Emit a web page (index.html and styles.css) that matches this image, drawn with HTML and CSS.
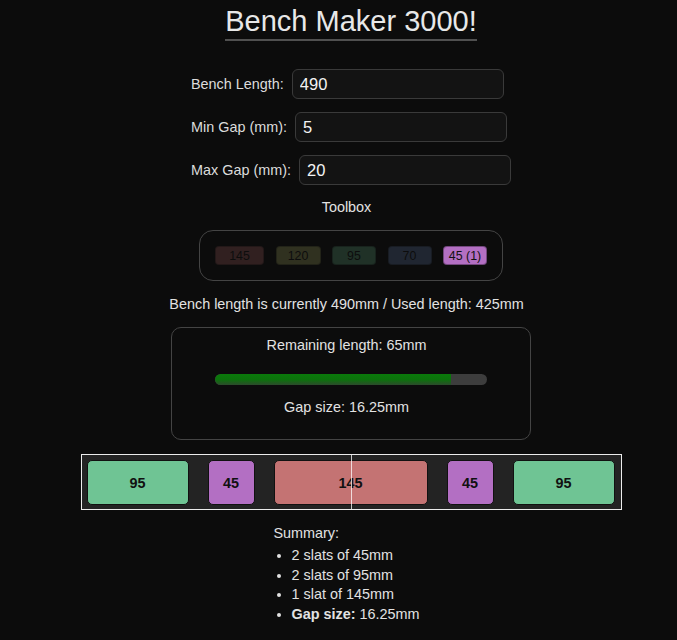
FILE: index.html
```html
<!DOCTYPE html>
<html lang="en">
<head>
<meta charset="utf-8">
<title>Bench Maker 3000!</title>
<link rel="stylesheet" href="styles.css">
</head>
<body>
<div class="app">
  <h1 class="title">Bench Maker 3000!</h1>

  <form class="form">
    <div class="row">
      <label class="label" for="len">Bench Length:</label>
      <input class="input" id="len" type="text" value="490">
    </div>
    <div class="row">
      <label class="label" for="min">Min Gap (mm):</label>
      <input class="input" id="min" type="text" value="5">
    </div>
    <div class="row">
      <label class="label" for="max">Max Gap (mm):</label>
      <input class="input" id="max" type="text" value="20">
    </div>
  </form>

  <div class="txt toolbox-label">Toolbox</div>
  <div class="toolbox">
    <button class="tool c145 dim w49">145</button>
    <button class="tool c120 dim w45">120</button>
    <button class="tool c95 dim w44">95</button>
    <button class="tool c70 dim w44">70</button>
    <button class="tool c45 w44">45 (1)</button>
  </div>

  <p class="txt status-line">Bench length is currently 490mm / Used length: 425mm</p>

  <div class="status">
    <p class="txt remaining">Remaining length: 65mm</p>
    <div class="progress"><div class="fill" style="width: 86.7%"></div></div>
    <p class="txt gap">Gap size: 16.25mm</p>
  </div>

  <div class="bench">
    <div class="slat c95 w102">95</div>
    <div class="slat c45 w47">45</div>
    <div class="slat c145 w154">145</div>
    <div class="slat c45 w47">45</div>
    <div class="slat c95 w102">95</div>
    <div class="center-line"></div>
  </div>

  <div class="txt summary">
    <div class="summary-title">Summary:</div>
    <ul class="summary-list">
      <li>2 slats of 45mm</li>
      <li>2 slats of 95mm</li>
      <li>1 slat of 145mm</li>
      <li><b>Gap size:</b> 16.25mm</li>
    </ul>
  </div>
</div>
</body>
</html>
```
FILE: styles.css
```css
html, body {
  background: #0c0c0c;
}
body {
  margin: 0;
  padding: 0 0 0 25px;
  color: #e2e2e2;
  font-family: "Liberation Sans", Arial, sans-serif;
  font-size: 14.4px;
}
.app {
  display: flex;
  flex-direction: column;
  align-items: center;
}
.txt {
  padding-right: 9px;
}
.title {
  margin: 5px 0 0 0;
  font-size: 29px;
  line-height: 33px;
  font-weight: normal;
  color: #e8e8e8;
  padding-bottom: 1px;
  border-bottom: 2px solid #505050;
}
.form {
  width: 320px;
  margin-top: 28px;
  display: flex;
  flex-direction: column;
  gap: 13px;
}
.row {
  display: flex;
  align-items: center;
  gap: 8px;
}
.label {
  color: #dcdcdc;
  font-size: 14.4px;
}
.input {
  box-sizing: border-box;
  width: 212px;
  height: 30px;
  background: #131313;
  border: 1px solid #3a3a3a;
  border-radius: 6px;
  color: #f4f4f4;
  font-family: "Liberation Sans", Arial, sans-serif;
  font-size: 16.5px;
  padding: 0 7px;
  outline: none;
}
.toolbox-label {
  margin-top: 14px;
  line-height: 16px;
}
.toolbox {
  box-sizing: border-box;
  width: 304px;
  margin-top: 15px;
  border: 1px solid #444;
  border-radius: 14px;
  padding: 15px 12px 15px 15px;
  display: flex;
  gap: 11.5px;
}
.tool {
  height: 19px;
  padding: 0;
  font-family: "Liberation Sans", Arial, sans-serif;
  font-size: 12.4px;
  color: #111;
  border: 1px solid rgba(0, 0, 0, 0.35);
  border-radius: 4px;
  text-align: center;
}
.dim {
  opacity: 0.2;
}
.w49 { width: 49px; }
.w45 { width: 45px; }
.w44 { width: 44px; }
.c145 { background: #c47373; }
.c120 { background: #c0c470; }
.c95 { background: #6fc494; }
.c70 { background: #7390c4; }
.c45 { background: #b36fc3; }

.status-line {
  margin: 15px 0 0;
  line-height: 16px;
}
.status {
  box-sizing: border-box;
  width: 360px;
  margin-top: 15px;
  border: 1px solid #444;
  border-radius: 10px;
  padding: 9px 0 24px;
  display: flex;
  flex-direction: column;
  align-items: center;
}
.status p {
  margin: 0;
  line-height: 16px;
}
.progress {
  width: 272px;
  height: 11px;
  margin-top: 21px;
  background: #3d3d3d;
  border-radius: 6px;
  overflow: hidden;
}
.fill {
  height: 100%;
  background: linear-gradient(to bottom, #0a7a0a 0%, #0c720c 50%, #2c4b2c 100%);
  border-radius: 6px 0 0 6px;
}
.status .gap {
  margin-top: 14px;
}
.bench {
  position: relative;
  box-sizing: border-box;
  width: 541px;
  margin-top: 14px;
  border: 1px solid #ececec;
  background: #232323;
  padding: 5px 6px 4px 5px;
  display: flex;
  justify-content: space-between;
}
.slat {
  box-sizing: border-box;
  height: 45px;
  border: 1px solid #111;
  border-radius: 5px;
  display: flex;
  align-items: center;
  justify-content: center;
  color: #111;
  font-weight: bold;
  font-size: 14.4px;
}
.w102 { width: 102px; }
.w47 { width: 47px; }
.w154 { width: 154px; }
.center-line {
  position: absolute;
  top: 0;
  bottom: 0;
  left: 50%;
  width: 1px;
  background: rgba(255, 255, 255, 0.75);
}
.summary {
  margin-top: 15px;
}
.summary-title {
  line-height: 16px;
}
.summary-list {
  margin: 5px 0 0;
  padding-left: 18px;
  line-height: 19.6px;
}
.summary-list b {
  font-weight: bold;
}
```
